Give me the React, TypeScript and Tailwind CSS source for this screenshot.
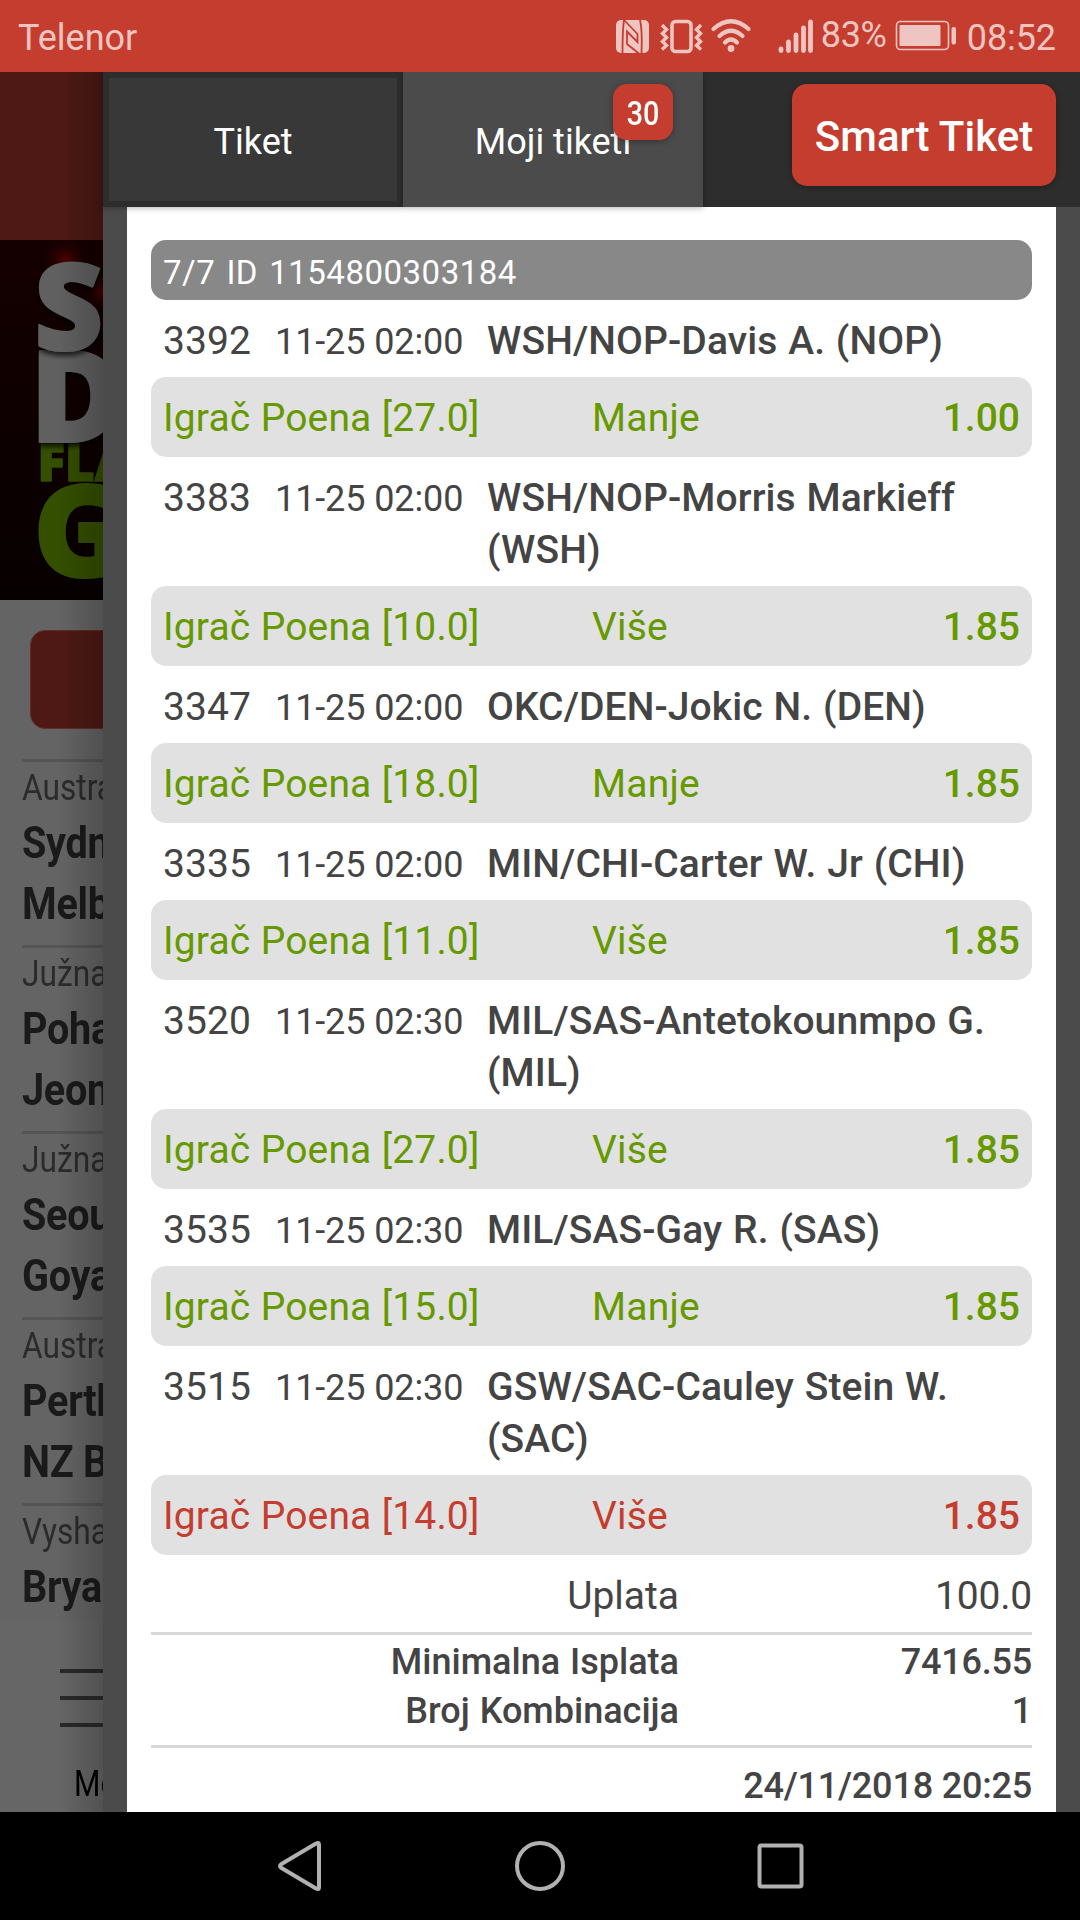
import React from "react";

type Bet = { code: string; time: string; title: string; range: string; pick: string; odds: string; lost?: boolean };

const bets: Bet[] = [
  { code: "3392", time: "11-25 02:00", title: "WSH/NOP-Davis A. (NOP)", range: "[27.0]", pick: "Manje", odds: "1.00" },
  { code: "3383", time: "11-25 02:00", title: "WSH/NOP-Morris Markieff (WSH)", range: "[10.0]", pick: "Više", odds: "1.85" },
  { code: "3347", time: "11-25 02:00", title: "OKC/DEN-Jokic N. (DEN)", range: "[18.0]", pick: "Manje", odds: "1.85" },
  { code: "3335", time: "11-25 02:00", title: "MIN/CHI-Carter W. Jr (CHI)", range: "[11.0]", pick: "Više", odds: "1.85" },
  { code: "3520", time: "11-25 02:30", title: "MIL/SAS-Antetokounmpo G. (MIL)", range: "[27.0]", pick: "Više", odds: "1.85" },
  { code: "3535", time: "11-25 02:30", title: "MIL/SAS-Gay R. (SAS)", range: "[15.0]", pick: "Manje", odds: "1.85" },
  { code: "3515", time: "11-25 02:30", title: "GSW/SAC-Cauley Stein W. (SAC)", range: "[14.0]", pick: "Više", odds: "1.85", lost: true },
];

const matches = [
  { league: "Australija", home: "Sydney", away: "Melbourne" },
  { league: "Južna Koreja", home: "Pohang", away: "Jeonbuk" },
  { league: "Južna Koreja", home: "Seoul", away: "Goyang" },
  { league: "Australija", home: "Perth", away: "NZ Breakers" },
  { league: "Vysha Liga", home: "Brya", away: "" },
];

function StatusBar() {
  return (
    <header className="flex h-[72px] shrink-0 items-start bg-[#c53d2f] text-[36px] leading-[42px] text-[#eec5c0]">
      <span className="mt-[17px] ml-[18px]">Telenor</span>
      <svg className="ml-auto h-[72px] w-[206px]" viewBox="0 0 206 72" fill="none" stroke="#eec5c0">
        <rect x="1" y="20" width="33" height="33" rx="5" fill="#eec5c0" stroke="none" />
        <path d="M9 20Q7.500 30 7.500 53M25 20Q27.500 30 26.500 53" stroke="#c53d2f" strokeWidth="1.800" />
        <path d="M9 20L22.500 34V42L12 31.500V44L24.500 54" stroke="#c53d2f" strokeWidth="1.800" />
        <rect x="57" y="21.500" width="19" height="30" rx="3.500" strokeWidth="3.600" />
        <path d="M47 25l4.500 4.500-4 4 4 4-4 4 4 4-4.500 4M86 25l-4.500 4.500 4 4-4 4 4 4-4 4 4.500 4" strokeWidth="3.400" />
        <path d="M98.500 29q17.500-15.500 35 0M104.500 36q11.500-10.500 23 0M110 42.500q6-6 12 0" strokeWidth="4.200" strokeLinecap="round" />
        <circle cx="116" cy="48.500" r="3.400" fill="#eec5c0" stroke="none" />
        <path d="M166 49v1.500M173.500 42v8.500M181 35v15.500M188.500 28v22.500M195.500 22v28.500" strokeWidth="4.800" strokeLinecap="round" />
      </svg>
      <span className="mt-[14px] w-[73px] tracking-[-0.4px]">83%</span>
      <svg className="h-[72px] w-[64px]" viewBox="0 0 64 72" fill="none">
        <rect x="2.500" y="21.500" width="52" height="28" rx="4" stroke="#eec5c0" strokeWidth="1.600" />
        <rect x="5.500" y="25" width="41" height="21" rx="1" fill="#eec5c0" />
        <rect x="57.500" y="27" width="4.500" height="17.500" rx="2" fill="#eec5c0" />
      </svg>
      <span className="mt-[17px] mr-[24px] ml-[9px] tracking-[-0.1px]">08:52</span>
    </header>
  );
}

function Banner() {
  return (
    <svg className="block h-[360px] w-[103px]" viewBox="0 0 103 360">
      <defs>
        <radialGradient id="glow"><stop offset="0" stopColor="#520000" /><stop offset="1" stopColor="#120000" stopOpacity="0" /></radialGradient>
        <linearGradient id="night" x1="0" y1="0" x2="0" y2="1"><stop offset="0" stopColor="#150000" /><stop offset="1" stopColor="#070000" /></linearGradient>
        <filter id="lift"><feDropShadow dx="0" dy="4" stdDeviation="2.5" floodColor="#000" floodOpacity=".7" /></filter>
      </defs>
      <rect width="103" height="360" fill="url(#night)" />
      <circle cx="66" cy="20" r="26" fill="url(#glow)" />
      <circle cx="103" cy="52" r="20" fill="url(#glow)" />
      <g fontFamily="Open Sans" fontWeight="800" strokeLinejoin="round">
        <text x="33" y="337" fontSize="127" fill="#344f00" stroke="#344f00" strokeWidth="2">G</text>
        <text x="37.500" y="241" fontSize="51" fill="#344f00" stroke="#344f00" strokeWidth="1.500">FLASH</text>
        <text x="30" y="202" fontSize="127" fill="#606160" stroke="#606160" strokeWidth="2" filter="url(#lift)">D</text>
        <text x="34" y="110" fontSize="120" fill="#606160" stroke="#606160" strokeWidth="2" filter="url(#lift)">S</text>
      </g>
    </svg>
  );
}

function Backdrop() {
  return (
    <div className="relative flex w-[103px] shrink-0 flex-col overflow-hidden bg-[#666666] whitespace-nowrap">
      <div className="h-[168px] shrink-0 bg-[#4e1914]" />
      <Banner />
      <div className="h-[420px] grow bg-[#646464]">
        <div className="mt-[30px] ml-[30px] h-[99px] w-[300px] rounded-[15px] border border-[#632c27] bg-[#4e1914]" />
        <div className="mt-[30px] ml-[22px] w-[300px]">
          {matches.map((m, i) => (
            <div key={i} className="h-[186px] origin-left scale-x-[0.88] border-t-[3px] border-[#555555]">
              <div className="pt-[5px] text-[36px] leading-[42px] text-[#2b2b2b]">{m.league}</div>
              <div className="pt-[3px] text-[45px] leading-[61px] font-bold tracking-[-0.3px] text-[#1a1a1a]">{m.home}<br />{m.away}</div>
            </div>
          ))}
        </div>
      </div>
      <div className="z-10 h-[192px] shrink-0 bg-[#666666]">
        <div className="mt-[49px] ml-[60px] flex flex-col gap-[23px]">
          <div className="h-[4px] bg-[#292929]" />
          <div className="h-[4px] bg-[#292929]" />
          <div className="h-[4px] bg-[#292929]" />
        </div>
        <div className="mt-[36px] ml-[74px] w-[70px] origin-left scale-x-[0.84] text-[36px] leading-[42px] text-black">Meni</div>
      </div>
      <div className="absolute inset-y-0 right-0 z-20 w-[45px] bg-linear-to-r from-transparent to-black/20" />
    </div>
  );
}

function BetRow({ bet }: { bet: Bet }) {
  return (
    <>
      <div className="flex items-baseline pt-[15px] pb-[10px] pl-[12px] text-[39px] leading-[52px] text-[#444444]">
        <span className="w-[112px] tracking-[0.1px]">{bet.code}</span>
        <span className="w-[212px] text-[36px] leading-[44px] tracking-[-0.1px]">{bet.time}</span>
        <span className="w-[530px] font-medium tracking-[0.1px] [word-spacing:1px]">{bet.title}</span>
      </div>
      <div className={`flex h-[80px] rounded-[15px] bg-[#e1e1e1] pt-px pr-[12px] pl-[12px] text-[39px] leading-[80px] ${bet.lost ? "text-[#c53d2f]" : "text-[#669900]"}`}>
        <span className="w-[429px] tracking-[0.15px] [word-spacing:0.5px]">Igrač Poena {bet.range}</span>
        <span className="tracking-[0.2px]">{bet.pick}</span>
        <span className="ml-auto font-medium">{bet.odds}</span>
      </div>
    </>
  );
}

function Total({ label, value, className }: { label: string; value: string; className: string }) {
  return (
    <div className={`flex justify-between ${className}`}>
      <span className="w-[528px] text-right [word-spacing:1px]">{label}</span>
      <span className="tracking-[-0.2px]">{value}</span>
    </div>
  );
}

function TicketPanel() {
  return (
    <section className="flex grow flex-col bg-[#4b4b4b]">
      <div className="relative z-10 flex h-[135px] shrink-0 bg-[#2d2d2d] text-[36px] text-white">
        <button className="w-[300px] border-6 border-[#2d2d2d] bg-[#383838] pt-[4px] shadow-[0_1px_6px_rgba(0,0,0,0.3)]">Tiket</button>
        <button className="relative w-[300px] bg-[#4b4b4b] pt-[4px] shadow-[0_1px_6px_rgba(0,0,0,0.3)]">
          Moji tiketi
          <span className="absolute top-[12px] right-[30px] h-[56px] w-[60px] rounded-[14px] bg-[#c53d2f] text-[33px] leading-[59px] shadow-[0_1px_6px_rgba(0,0,0,0.35)]">
            <span className="block scale-x-[0.87] font-medium">30</span>
          </span>
        </button>
        <button className="mt-[12px] mr-[24px] ml-auto h-[102px] w-[264px] rounded-[15px] bg-[#c53d2f] pt-[2px] text-[42px] font-medium shadow-[0_1px_6px_rgba(0,0,0,0.3)]">Smart Tiket</button>
      </div>
      <div className="mr-[24px] ml-[24px] grow bg-white px-[24px] pt-[33px] text-[#444444]">
        <div className="h-[60px] rounded-[15px] bg-[#888888] px-[12px] pt-[2px] text-[33px] leading-[62px] tracking-[0.5px] whitespace-pre text-white [word-spacing:2.500px]">7/7 ID 1154800303184</div>
        {bets.map((b) => <BetRow key={b.code} bet={b} />)}
        <Total label="Uplata" value="100.0" className="h-[77px] pt-[15px] text-[39px] leading-[52px]" />
        <div className="border-y-[3px] border-[#d8d8d8] pt-[3px] pb-[10px] text-[36px] leading-[49px] font-medium">
          <Total label="Minimalna Isplata" value="7416.55" className="h-[49px]" />
          <Total label="Broj Kombinacija" value="1" className="h-[48px]" />
        </div>
        <div className="pt-[14px] text-right text-[36px] leading-[49px] font-medium tracking-[-0.2px]">24/11/2018 20:25</div>
      </div>
    </section>
  );
}

function NavBar() {
  return (
    <nav className="flex h-[108px] shrink-0 items-center justify-center bg-black">
      <svg className="h-[60px] w-[540px]" viewBox="0 0 540 60" fill="none" stroke="#b1b1b1" strokeWidth="4" strokeLinejoin="round">
        <path d="M49 8.500Q49 6 46 7.500L11.500 28Q8.500 30 11.500 32L46 52.500Q49 54 49 51.500Z" />
        <circle cx="270" cy="30" r="23" />
        <rect x="489.500" y="9.500" width="42" height="41" rx="2" />
      </svg>
    </nav>
  );
}

export default function App() {
  return (
    <div className="flex h-[1920px] w-[1080px] flex-col overflow-hidden font-['Roboto',sans-serif]">
      <StatusBar />
      <main className="flex h-[1740px] shrink-0 overflow-hidden">
        <Backdrop />
        <TicketPanel />
      </main>
      <NavBar />
    </div>
  );
}
